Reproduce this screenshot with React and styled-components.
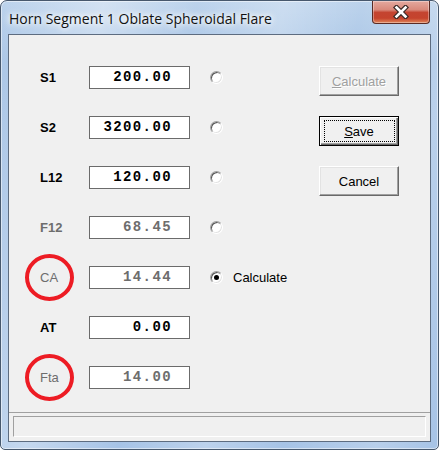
import React from 'react';
import styled, { createGlobalStyle, css } from 'styled-components';

const GlobalStyle = createGlobalStyle`
  html, body {
    margin: 0;
    padding: 0;
    background: #ffffff;
  }
  body {
    width: 439px;
    height: 450px;
    overflow: hidden;
    font-family: "Liberation Sans", Arial, sans-serif;
  }
`;

const fields = [
  { name: 'S1', value: '200.00', radio: true, bold: true },
  { name: 'S2', value: '3200.00', radio: true, bold: true },
  { name: 'L12', value: '120.00', radio: true, bold: true },
  { name: 'F12', value: '68.45', radio: true, dim: true, bold: true },
  { name: 'CA', value: '14.44', radio: true, checked: true, dim: true, circled: true },
  { name: 'AT', value: '0.00', bold: true },
  { name: 'Fta', value: '14.00', dim: true, circled: true }
];

function App() {
  return (
    <>
      <GlobalStyle />
      <Window>
        <TitleBar>
          <Title>Horn Segment 1 Oblate Spheroidal Flare</Title>
          <CloseButton>
            <svg width="16" height="14" viewBox="0 0 16 14">
              <path d="M3.5 2.5 L12.5 11.5 M12.5 2.5 L3.5 11.5" stroke="#3b2a27" strokeWidth="5" strokeLinecap="square" />
              <path d="M3.5 2.5 L12.5 11.5 M12.5 2.5 L3.5 11.5" stroke="#ffffff" strokeWidth="2.6" strokeLinecap="square" />
            </svg>
          </CloseButton>
        </TitleBar>
        <Client>
          <Content>
            <Fields>
              {fields.map(f => (
                <Row key={f.name}>
                  <Label $dim={f.dim} $bold={f.bold} $circled={f.circled}>
                    {f.name}
                  </Label>
                  <ValueBox $dim={f.dim}>{f.value}</ValueBox>
                  {f.radio && <Radio $checked={f.checked} />}
                  {f.checked && <RadioText>Calculate</RadioText>}
                </Row>
              ))}
            </Fields>
            <Buttons>
              <Button $disabled><u>C</u>alculate</Button>
              <Button $default><u>S</u>ave</Button>
              <Button>Cancel</Button>
            </Buttons>
          </Content>
          <StatusBar>
            <StatusPanel />
          </StatusBar>
        </Client>
      </Window>
    </>
  );
}

export default App;

const Window = styled.div`
  width: 439px;
  height: 450px;
  box-sizing: border-box;
  border: 1px solid #47586d;
  border-radius: 7px 7px 5px 5px;
  background:
    linear-gradient(100deg, rgba(255,255,255,0) 0%, rgba(255,255,255,0.35) 20%, rgba(255,255,255,0) 38%, rgba(255,255,255,0.25) 55%, rgba(255,255,255,0) 70%, rgba(255,255,255,0.2) 88%, rgba(255,255,255,0) 100%),
    linear-gradient(to bottom, #bcd3ec 0, #a9c5e6 60px, #a6c3e6 100%);
  box-shadow: inset 0 0 0 1px rgba(255,255,255,0.5);
  display: flex;
  flex-direction: column;
  padding: 0 7px 7px;
`;

const TitleBar = styled.div`
  height: 33px;
  display: flex;
  align-items: flex-start;
  justify-content: space-between;
`;

const Title = styled.div`
  font-family: "Open Sans", "Noto Sans", sans-serif;
  font-size: 14px;
  line-height: 20px;
  color: #111;
  padding: 8px 0 0 1px;
  text-shadow: 0 0 8px #fff, 0 0 8px #fff, 0 0 4px rgba(255,255,255,0.8);
`;

const CloseButton = styled.div`
  width: 58px;
  height: 23px;
  margin-right: 1px;
  box-sizing: border-box;
  border: 1px solid #5b2b24;
  border-top: none;
  border-radius: 0 0 4px 4px;
  background: linear-gradient(to bottom, #e4a99f 0%, #d9897b 40%, #c44431 52%, #c5432d 78%, #e0865a 100%);
  box-shadow: inset 0 0 0 1px rgba(255,255,255,0.35);
  display: flex;
  align-items: center;
  justify-content: center;
`;

const Client = styled.div`
  flex: 1;
  display: flex;
  flex-direction: column;
  background: #f0f0f0;
  border: 1px solid #5d6c80;
`;

const Content = styled.div`
  flex: 1;
  display: flex;
  justify-content: space-between;
  align-items: flex-start;
  padding: 31px 31px 0;
`;

const Fields = styled.div`
  display: flex;
  flex-direction: column;
  gap: 27px;
`;

const Row = styled.div`
  display: flex;
  align-items: center;
  height: 23px;
`;

const Label = styled.span`
  position: relative;
  width: 49px;
  flex: none;
  font-size: 13px;
  font-weight: ${p => (p.$bold ? 'bold' : 'normal')};
  color: ${p => (p.$dim ? '#6d6d6d' : '#000')};

  ${p => p.$circled && css`
    &::after {
      content: '';
      position: absolute;
      left: -15px;
      top: -16px;
      width: 49px;
      height: 47px;
      box-sizing: border-box;
      border: 4px solid #ed1c24;
      border-radius: 50%;
    }
  `}
`;

const ValueBox = styled.div`
  width: 101px;
  height: 23px;
  box-sizing: border-box;
  border: 1px solid #6b6b6b;
  background: #fff;
  display: flex;
  align-items: center;
  justify-content: flex-end;
  padding: 0 17px 2px 0;
  font-family: "Liberation Mono", "Courier New", monospace;
  font-weight: bold;
  font-size: 14px;
  letter-spacing: 1.4px;
  color: ${p => (p.$dim ? '#6d6d6d' : '#000')};
`;

const Radio = styled.span`
  position: relative;
  width: 13px;
  height: 13px;
  box-sizing: border-box;
  flex: none;
  margin-left: 20px;
  border-radius: 50%;
  background: #fff;
  border: 1px solid;
  border-color: #a0a0a0 #ffffff #ffffff #a0a0a0;
  box-shadow: inset 1px 1px 0 #555, inset -1px -1px 0 #e3e3e3;

  ${p => p.$checked && css`
    &::after {
      content: '';
      position: absolute;
      left: 3px;
      top: 3px;
      width: 5px;
      height: 5px;
      border-radius: 50%;
      background: #000;
    }
  `}
`;

const RadioText = styled.span`
  margin-left: 10px;
  font-size: 13px;
  color: #000;
`;

const Buttons = styled.div`
  display: flex;
  flex-direction: column;
  gap: 20px;
`;

const Button = styled.div`
  position: relative;
  width: 80px;
  height: 30px;
  box-sizing: border-box;
  background: #f0f0f0;
  border: 1px solid;
  border-color: #ffffff #696969 #696969 #ffffff;
  box-shadow: inset -1px -1px 0 #a0a0a0, inset 1px 1px 0 #e3e3e3;
  display: flex;
  align-items: center;
  justify-content: center;
  font-size: 13px;
  color: #000;

  ${p => p.$disabled && css`
    color: #a0a0a0;
    text-shadow: 1px 1px 0 #fff;
  `}

  ${p => p.$default && css`
    border: 1px solid #000;
    box-shadow: inset 1px 1px 0 #fff, inset -1px -1px 0 #696969, inset -2px -2px 0 #a0a0a0;

    &::after {
      content: '';
      position: absolute;
      inset: 3px 3px 3px 4px;
      border: 1px dotted #000;
    }
  `}
`;

const StatusBar = styled.div`
  border-top: 1px solid #a0a0a0;
  padding: 3px 4px 4px;
`;

const StatusPanel = styled.div`
  height: 21px;
  box-sizing: border-box;
  border: 1px solid;
  border-color: #a0a0a0 #ffffff #ffffff #a0a0a0;
`;
